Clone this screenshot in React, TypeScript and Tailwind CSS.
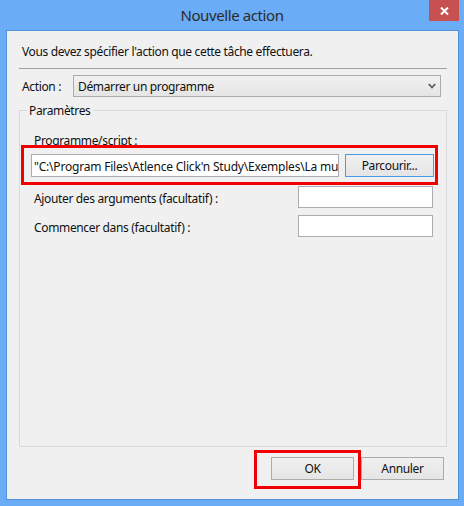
import React from 'react';

const font = { fontFamily: '"Noto Sans", "Open Sans", sans-serif' };

function Btn({ children, blue = false }: { children: React.ReactNode; blue?: boolean }) {
  return (
    <div
      className={`h-[23px] flex items-center justify-center border bg-gradient-to-b from-[#f0f0f0] to-[#e5e5e5] text-[12px] text-[#111] pt-[1px] ${
        blue ? 'border-[#4a9be6]' : 'border-[#acacac]'
      }`}
    >
      {children}
    </div>
  );
}

export default function App() {
  const path = '"C:\\Program Files\\Atlence Click\'n Study\\Exemples\\La musique\\musique.exe"';
  return (
    <div className="w-[464px] h-[506px] bg-[#6aacf5] flex flex-col overflow-hidden" style={font}>
      <div className="relative h-[30px] flex items-center justify-center">
        <span className="text-[15px] text-[#2b2b2b] leading-[20px] tracking-[-0.4px] mt-[-1px]">Nouvelle action</span>
        <div className="absolute right-[5px] top-0 w-[30px] h-[21px] bg-[#c75050] flex items-center justify-center">
          <svg width="9" height="8" viewBox="0 0 9 8">
            <path d="M1 0.5 L8 7.5 M8 0.5 L1 7.5" stroke="#fff" strokeWidth="2" />
          </svg>
        </div>
      </div>
      <div className="ml-[6px] w-[453px] h-[470px] border border-[#4f90d9] bg-[#f0f0f0] flex flex-col text-[12px] text-[#111] tracking-[-0.35px]">
        <div className="mt-[13px] pl-[15px] leading-[16px]">Vous devez spécifier l'action que cette tâche effectuera.</div>
        <div className="mt-[8px] ml-[12px] w-[428px] h-px bg-[#a0a0a0]" />
        <div className="mt-[6px] flex items-center">
          <div className="pl-[15px] w-[66px] leading-[16px] mt-[2px]">Action :</div>
          <div className="w-[368px] h-[22px] border border-[#acacac] bg-gradient-to-b from-[#f0f0f0] to-[#e5e5e5] flex items-center pl-[4px] pr-[4px]">
            <span className="flex-1 pt-[2px]">Démarrer un programme</span>
            <svg width="8" height="6" viewBox="0 0 8 6">
              <path d="M0.8 1 L4 4.5 L7.2 1" stroke="#5a5a5a" strokeWidth="1.8" fill="none" />
            </svg>
          </div>
        </div>
        <div className="relative mt-[13px] ml-[12px] w-[428px] h-[337px] border border-[#d9d9d9] flex flex-col">
          <div className="absolute left-[7px] top-[-8px] px-[2px] bg-[#f0f0f0] leading-[16px]">Paramètres</div>
          <div className="mt-[23px] pl-[14px] leading-[14px]">Programme/script :</div>
          <div className="mt-[6px] ml-[11px] flex items-center">
            <div className="w-[308px] h-[23px] border border-[#abadb3] bg-white overflow-hidden whitespace-nowrap pl-[2px] pt-[1px] leading-[21px] tracking-[-0.2px]">
              {path}
            </div>
            <div className="ml-[6px] w-[89px]">
              <Btn blue>Parcourir...</Btn>
            </div>
          </div>
          <div className="mt-[9px] flex items-center">
            <div className="pl-[14px] flex-1 leading-[16px] mt-[4px]">Ajouter des arguments (facultatif) :</div>
            <div className="mr-[13px] w-[135px] h-[22px] border border-[#abadb3] bg-white" />
          </div>
          <div className="mt-[7px] flex items-center">
            <div className="pl-[14px] flex-1 leading-[16px] mt-[4px]">Commencer dans (facultatif) :</div>
            <div className="mr-[13px] w-[135px] h-[22px] border border-[#abadb3] bg-white" />
          </div>
          <div className="pointer-events-none absolute left-[1px] top-[34px] w-[417px] h-[40px] border-[3px] border-[#f00000]" />
        </div>
        <div className="mt-[10px] flex justify-end gap-[7px] pr-[14px]">
          <div className="relative w-[83px]">
            <Btn>OK</Btn>
            <div className="pointer-events-none absolute left-[-17px] top-[-7px] w-[107px] h-[39px] border-[3px] border-[#f00000]" />
          </div>
          <div className="w-[83px]">
            <Btn>Annuler</Btn>
          </div>
        </div>
      </div>
    </div>
  );
}
